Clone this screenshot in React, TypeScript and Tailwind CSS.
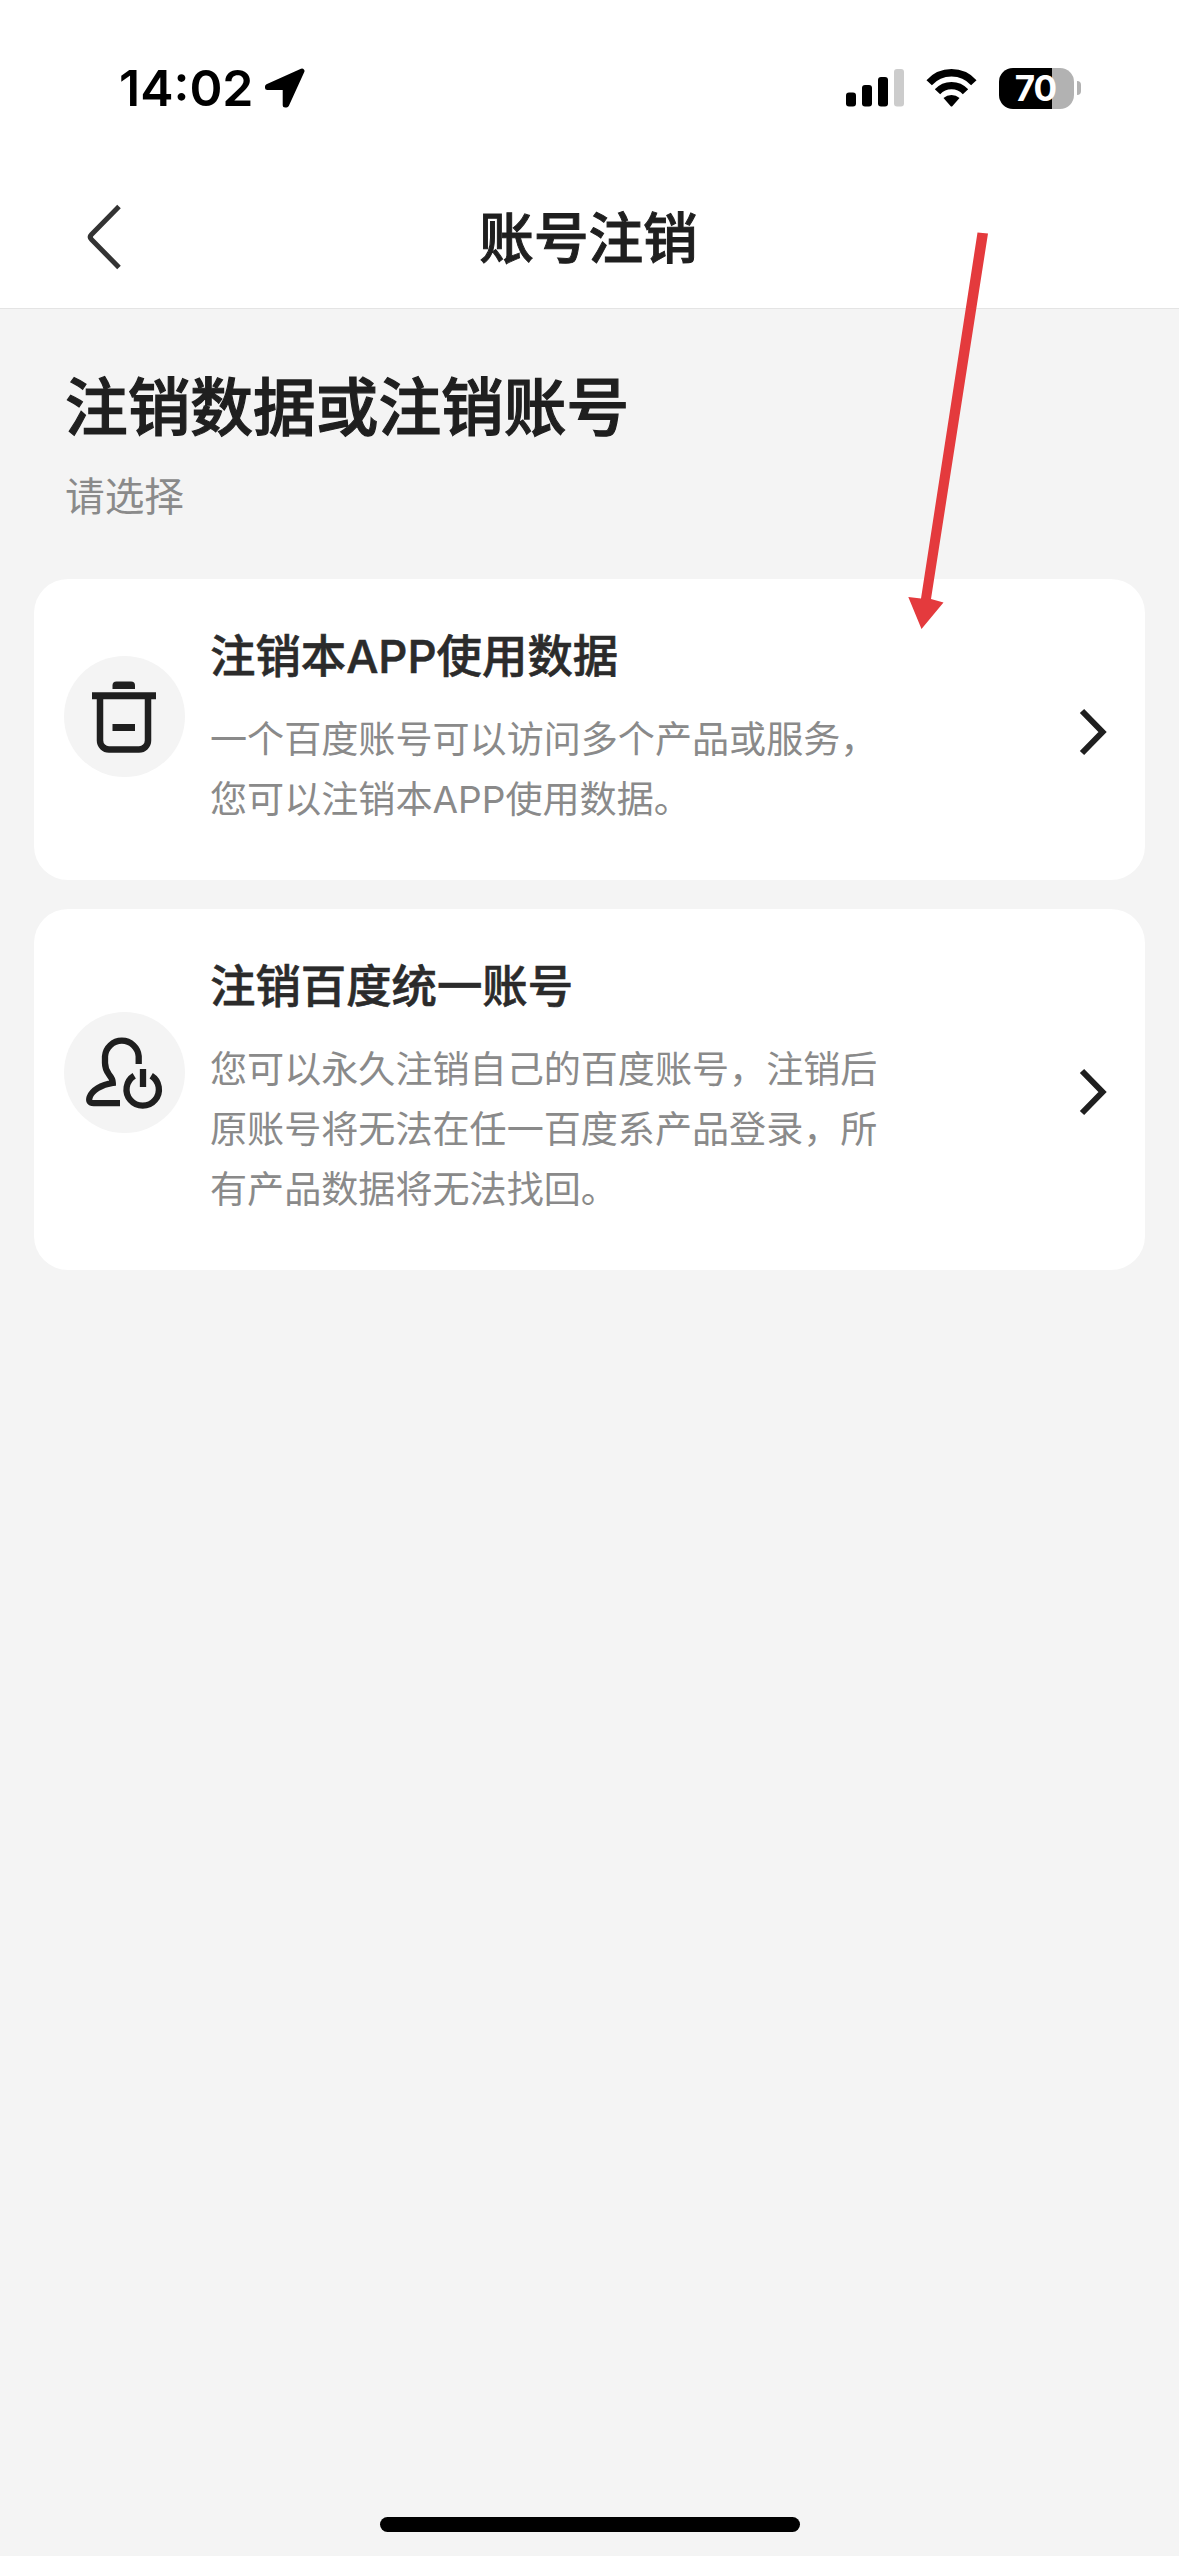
import React from "react";

const StatusBar: React.FC = () => {
  return (
    <div className="flex h-[166px] items-center justify-between pl-[119px] pr-[98px] pt-[10px]">
      <div className="flex items-center">
        <span className="text-[50px] font-semibold leading-[60px] text-black">14:02</span>
        <svg className="ml-[11px] h-10 w-10" viewBox="0 0 40 40">
          <path
            d="M2.5 18.5 37 3 21.5 37H20.2V19.600H2.500Z"
            fill="#000"
            stroke="#000"
            strokeWidth="5"
            strokeLinejoin="round"
          />
        </svg>
      </div>
      <div className="flex items-center">
        <svg className="h-[38px] w-[58px]" viewBox="0 0 58 38">
          <rect x="0" y="23.5" width="10" height="14" rx="3" />
          <rect x="16" y="16" width="10" height="21.5" rx="3" />
          <rect x="32" y="8" width="10" height="29.5" rx="3" />
          <rect x="48" y="0" width="10" height="37.5" rx="3" fill="#ccc" />
        </svg>
        <svg className="ml-[22px] h-[38px] w-[51px]" viewBox="0 0 51 38">
          <path d="M3.2 13.7a30 30 0 0 1 44.6 0" fill="none" stroke="#000" strokeWidth="7.3" />
          <path d="M11.500 22.700a19 19 0 0 1 28 0" fill="none" stroke="#000" strokeWidth="7.300" />
          <path d="M17.500 29a12 12 0 0 1 16 0L26.500 37a1.400 1.400 0 0 1-2 0Z" />
        </svg>
        <div className="ml-[22px] flex h-[41px] w-[75px] items-center justify-center overflow-hidden rounded-[14px] bg-[linear-gradient(to_right,#000_53px,#b2b2b2_53px)] pr-[2px]">
          <span className="text-[35px] font-bold leading-[41px] tracking-[-1px] text-white">70</span>
        </div>
        <div className="ml-[3px] h-[14px] w-[4px] rounded-r-full bg-[#b2b2b2]" />
      </div>
    </div>
  );
};

const TrashIcon: React.FC = () => (
  <svg className="h-[121px] w-[121px]" viewBox="0 0 121 121">
    <circle cx="60.5" cy="60.5" r="60.5" fill="#f4f4f4" />
    <path d="M48.500 33v-3.500a4 4 0 0 1 4-4h14.500a4 4 0 0 1 4 4v3.500Z" fill="#1f1f1f" />
    <path d="M28 36.300h64v7h-64Z" fill="#1f1f1f" />
    <path d="M36 41v43.500a9 9 0 0 0 9 9h30a9 9 0 0 0 9-9V41" fill="none" stroke="#1f1f1f" strokeWidth="6.5" />
    <path d="M48.500 68h22.500v7h-22.500Z" fill="#1f1f1f" />
  </svg>
);

const UserPowerIcon: React.FC = () => (
  <svg className="h-[121px] w-[121px]" viewBox="0 0 121 121">
    <circle cx="60.5" cy="60.5" r="60.5" fill="#f4f4f4" />
    <g fill="none" stroke="#1f1f1f" strokeWidth="6.3">
      <path d="M74.700 52V44.300a16.900 16.900 0 0 0-33.700 0V51q0 6 4 11.500Q48.800 67 48.800 71C37 72.500 28 78.500 25.700 85q-2 6.200 4 6.200H56" />
      <path d="M70.200 63.700a16.200 16.200 0 1 0 17 0" />
      <path d="M79 57v18" />
    </g>
  </svg>
);

type OptionProps = {
  icon: React.ReactNode;
  title: string;
  lines: string[];
};

const OptionCard: React.FC<OptionProps> = ({ icon, title, lines }) => {
  return (
    <div className="flex items-center rounded-[34px] bg-white pb-[50px] pl-[30px] pr-[38px] pt-[48px]">
      <div className="shrink-0">{icon}</div>
      <div className="ml-[25px] flex-1">
        <h2 className="text-[45.4px] font-medium leading-[60px] text-[#2b2b2b] [-webkit-text-stroke:0.6px_#2b2b2b]">{title}</h2>
        <p className="mt-[23px] text-[37.1px] font-normal leading-[60px] text-[#8a8a8a]">
          {lines.map((line) => (
            <span key={line} className="block whitespace-nowrap">
              {line}
            </span>
          ))}
        </p>
      </div>
      <svg className="mt-[6px] h-[48px] w-[28px]" viewBox="0 0 28 48">
        <path d="M3 3 23.500 24 3 45" fill="none" stroke="#1f1f1f" strokeWidth="6" />
      </svg>
    </div>
  );
};

export default function App() {
  return (
    <div className="relative flex h-[2556px] w-[1179px] flex-col overflow-hidden bg-[#f4f4f4] font-['Inter','Noto_Sans_CJK_SC',sans-serif]">
      <div className="bg-white">
        <StatusBar />
        {/* Nav bar */}
        <div className="flex h-[143px] items-center border-b border-[#e4e4e4] pl-[85px] pr-[85px]">
          <svg className="h-[66px] w-[38px]" viewBox="0 0 38 66">
            <path d="M34 2.500 6.500 30.500q-2.500 2.500 0 5L34 63.500" fill="none" stroke="#333" strokeWidth="5" />
          </svg>
          <h1 className="flex-1 pr-[40px] pt-[2px] text-center text-[54.6px] font-medium leading-[70px] text-[#1f1f1f] [-webkit-text-stroke:1px_#1f1f1f]">
            账号注销
          </h1>
        </div>
      </div>

      <div className="px-[65px] pt-[58px]">
        <p className="text-[62.7px] font-medium leading-[80px] text-[#1f1f1f] [-webkit-text-stroke:1.2px_#1f1f1f]">注销数据或注销账号</p>
        <p className="mt-5 text-[39.7px] font-normal leading-[60px] text-[#8a8a8a]">请选择</p>
      </div>

      <div className="mt-[52px] flex flex-col gap-[29px] px-[34px]">
        <OptionCard
          icon={<div className="-mt-[25px]"><TrashIcon /></div>}
          title="注销本APP使用数据"
          lines={["一个百度账号可以访问多个产品或服务，", "您可以注销本APP使用数据。"]}
        />
        <OptionCard
          icon={<div className="-mt-[33px]"><UserPowerIcon /></div>}
          title="注销百度统一账号"
          lines={["您可以永久注销自己的百度账号，注销后", "原账号将无法在任一百度系产品登录，所", "有产品数据将无法找回。"]}
        />
      </div>

      {/* Home indicator */}
      <div className="mx-auto mb-[24px] mt-auto h-[15px] w-[420px] rounded-full bg-black" />

      {/* Pointer arrow over the first card */}
      <svg className="absolute left-[900px] top-[225px] h-[410px] w-[100px]" viewBox="0 0 100 410">
        <path d="M77.500 7.500 88 8.500 31 374 43.500 377.500 21.500 404 8.300 372 21 373.500Z" fill="#e43a3d" />
      </svg>
    </div>
  );
}
